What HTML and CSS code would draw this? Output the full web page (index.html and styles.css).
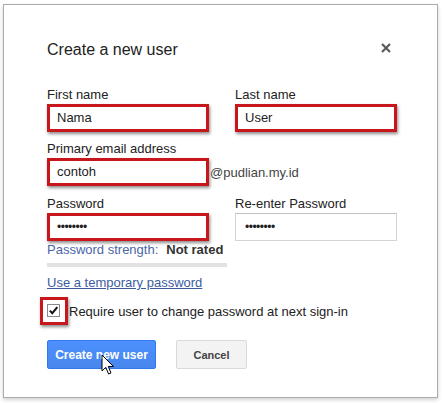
FILE: index.html
```html
<!DOCTYPE html>
<html>
<head>
<meta charset="utf-8">
<link rel="stylesheet" href="styles.css">
</head>
<body>
<div class="page">
  <div class="dialog">
    <div class="head">
      <h1 class="title">Create a new user</h1>
      <svg class="close" width="10" height="10" viewBox="0 0 10 10"><path d="M1 1L9 9M9 1L1 9" stroke="#5a5a5a" stroke-width="2.2" fill="none"/></svg>
    </div>

    <div class="row row-first">
      <div class="field">
        <div class="label">First name</div>
        <div class="input mark">Nama</div>
      </div>
      <div class="field">
        <div class="label">Last name</div>
        <div class="input mark">User</div>
      </div>
    </div>

    <div class="row">
      <div class="field">
        <div class="label">Primary email address</div>
        <div class="email">
          <div class="input mark">contoh</div>
          <span class="domain">@pudlian.my.id</span>
        </div>
      </div>
    </div>

    <div class="row row-pass">
      <div class="field">
        <div class="label">Password</div>
        <div class="input mark dots">••••••••</div>
      </div>
      <div class="field">
        <div class="label">Re-enter Password</div>
        <div class="input dots">••••••••</div>
      </div>
    </div>

    <div class="strength"><span class="s-label">Password strength:</span><b class="s-val">Not rated</b></div>
    <div class="bar"></div>

    <a class="link">Use a temporary password</a>

    <div class="check-row">
      <div class="check-mark">
        <svg class="checkbox" width="13" height="13" viewBox="0 0 13 13">
          <rect x="0.5" y="0.5" width="12" height="12" fill="#fff" stroke="#8a8a8a"/>
          <path d="M2.8 6.6L5.3 9.2L10.3 3.2" stroke="#111" stroke-width="2" fill="none"/>
        </svg>
      </div>
      <span class="check-text">Require user to change password at next sign-in</span>
    </div>

    <div class="buttons">
      <div class="btn primary">Create new user
        <svg class="cursor" width="14" height="22" viewBox="0 0 14 22"><path d="M1 1L1 17L4.8 13.4L7.6 20L10 19L7.3 12.5L12.5 12.5Z" fill="#fff" stroke="#000" stroke-width="1" stroke-linejoin="round"/></svg>
      </div>
      <div class="btn secondary">Cancel</div>
    </div>
  </div>
</div>
</body>
</html>
```

FILE: styles.css
```css
html, body {
  margin: 0;
  padding: 0;
  background: #fff;
}
body {
  font-family: "Liberation Sans", Arial, sans-serif;
  color: #222;
  width: 443px;
  height: 403px;
  overflow: hidden;
}
.page {
  padding: 4px 0 0 3px;
}
.dialog {
  box-sizing: border-box;
  width: 435px;
  height: 394px;
  border: 1px solid #acacac;
  box-shadow: 0 2px 4px rgba(0,0,0,0.18);
  padding: 35px 46px 0 43px;
  background: #fff;
}
.head {
  display: flex;
  justify-content: space-between;
  align-items: flex-start;
}
.title {
  margin: 0;
  font-size: 16px;
  font-weight: normal;
  line-height: 19px;
  color: #222;
}
.close {
  margin-top: 3px;
}
.row {
  display: flex;
  gap: 26px;
  margin-top: 9px;
}
.row-first {
  margin-top: 28px;
}
.row-pass {
  margin-top: 10px;
}
.field {
  display: flex;
  flex-direction: column;
  gap: 2px;
}
.label {
  font-size: 13px;
  line-height: 15px;
  color: #222;
}
.input {
  box-sizing: border-box;
  width: 162px;
  height: 28px;
  border: 1px solid #d4d4d4;
  border-top-color: #c0c0c0;
  font-size: 13px;
  line-height: 26px;
  padding-left: 9px;
  color: #222;
  background: #fff;
}
.input.mark {
  border: 3px solid #c8161d;
  padding-left: 7px;
  line-height: 22px;
  box-shadow: 1px 2px 3px rgba(0,0,0,0.45);
}
.input.dots {
  font-size: 12px;
  letter-spacing: -0.5px;
}
.email {
  display: flex;
  align-items: center;
}
.domain {
  font-size: 13px;
  color: #444;
  margin-left: 1px;
}
.strength {
  margin-top: 1px;
  font-size: 13px;
  line-height: 15px;
}
.s-label {
  color: #4a66a6;
}
.s-val {
  color: #333;
  margin-left: 8px;
}
.bar {
  margin-top: 6px;
  width: 180px;
  height: 4px;
  background: #e2e2e2;
}
.link {
  display: inline-block;
  margin-top: 8px;
  font-size: 13px;
  line-height: 15px;
  color: #3d5c9f;
  text-decoration: underline;
}
.check-row {
  display: flex;
  align-items: center;
  margin-top: 6px;
  margin-left: -7px;
}
.check-mark {
  box-sizing: border-box;
  width: 28px;
  height: 28px;
  border: 3px solid #c8161d;
  padding: 4px 5px 5px 4px;
  box-shadow: 1px 2px 3px rgba(0,0,0,0.45);
  display: flex;
}
.checkbox {
  display: block;
}
.check-text {
  font-size: 13px;
  color: #222;
  margin-left: 1px;
}
.buttons {
  display: flex;
  gap: 20px;
  margin-top: 15px;
}
.btn {
  box-sizing: border-box;
  height: 29px;
  border-radius: 2px;
  display: flex;
  align-items: center;
  justify-content: center;
  font-weight: bold;
}
.primary {
  position: relative;
  width: 109px;
  background: linear-gradient(#4d90fe, #4787ed);
  border: 1px solid #3079ed;
  color: #fff;
  font-size: 12px;
}
.secondary {
  width: 71px;
  background: #f3f3f3;
  border: 1px solid #dadada;
  color: #444;
  font-size: 11px;
}
.cursor {
  position: absolute;
  left: 53px;
  top: 13px;
}
```
